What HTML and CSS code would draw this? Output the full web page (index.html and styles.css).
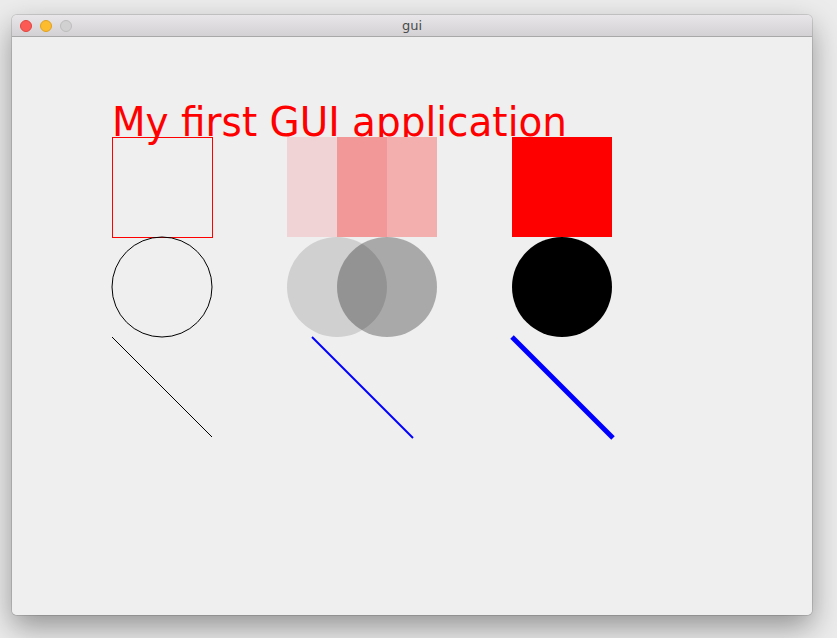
FILE: index.html
```html
<!DOCTYPE html>
<html>
<head>
<meta charset="utf-8">
<link rel="stylesheet" href="styles.css">
</head>
<body>
<div class="window">
  <div class="titlebar">
    <div class="lights">
      <span class="light red"></span>
      <span class="light yellow"></span>
      <span class="light gray"></span>
    </div>
    <div class="title">gui</div>
  </div>
  <div class="content">
    <svg class="canvas" width="800" height="578" viewBox="0 0 800 578" shape-rendering="crispEdges">
      <text x="100" y="99" class="headline" textLength="455" lengthAdjust="spacingAndGlyphs">My first GUI application</text>
      <!-- left column -->
      <rect x="100.5" y="100.5" width="100" height="100" fill="none" stroke="#ff0000" stroke-width="1"/>
      <circle cx="150" cy="250" r="50" fill="none" stroke="#000" stroke-width="1" shape-rendering="auto"/>
      <line x1="100" y1="300" x2="200" y2="400" stroke="#000" stroke-width="1" shape-rendering="auto"/>
      <!-- middle column -->
      <rect x="275" y="100" width="50" height="100" fill="#f0d3d4"/>
      <rect x="325" y="100" width="50" height="100" fill="#f29898"/>
      <rect x="375" y="100" width="50" height="100" fill="#f3aeae"/>
      <g shape-rendering="auto">
        <circle cx="325" cy="250" r="50" fill="#000" fill-opacity="0.13"/>
        <circle cx="375" cy="250" r="50" fill="#000" fill-opacity="0.29"/>
        <line x1="300" y1="300" x2="401" y2="401" stroke="#0000ff" stroke-width="2"/>
        <line x1="500" y1="300" x2="601" y2="401" stroke="#0000ff" stroke-width="5"/>
        <circle cx="550" cy="250" r="50" fill="#000"/>
      </g>
      <!-- right column -->
      <rect x="500" y="100" width="100" height="100" fill="#ff0000"/>
    </svg>
  </div>
</div>
</body>
</html>
```

FILE: styles.css
```css
html, body {
  margin: 0;
  padding: 0;
}
body {
  width: 837px;
  height: 638px;
  overflow: hidden;
  background: #ececec;
  padding: 15px 0 0 12px;
  box-sizing: border-box;
  font-family: "DejaVu Sans", "Liberation Sans", sans-serif;
}
.window {
  width: 800px;
  height: 600px;
  border-radius: 5px;
  overflow: hidden;
  display: flex;
  flex-direction: column;
  box-shadow: 0 0 0 1px rgba(0,0,0,0.12), 0 12px 30px rgba(0,0,0,0.38);
  background: #efefef;
}
.titlebar {
  height: 21px;
  flex: none;
  display: flex;
  align-items: center;
  position: relative;
  background: linear-gradient(#e8e6e8, #d3d1d3);
  border-bottom: 1px solid #a8a8a8;
}
.lights {
  display: flex;
  gap: 8px;
  padding-left: 8px;
}
.light {
  width: 12px;
  height: 12px;
  border-radius: 50%;
  box-sizing: border-box;
}
.light.red {
  background: #fc5b55;
  border: 1px solid #e0443e;
}
.light.yellow {
  background: #fdbb2e;
  border: 1px solid #dea123;
}
.light.gray {
  background: #d2d1d2;
  border: 1px solid #bdbcbd;
}
.title {
  position: absolute;
  left: 0;
  right: 0;
  top: 0;
  line-height: 21px;
  text-align: center;
  font-size: 13px;
  color: #4a4a4a;
  font-family: "DejaVu Sans", sans-serif;
}
.content {
  flex: 1;
  background: #efefef;
}
.canvas {
  display: block;
}
.headline {
  font-family: "DejaVu Sans", "Liberation Sans", sans-serif;
  font-size: 40px;
  fill: #ff0000;
}
```
